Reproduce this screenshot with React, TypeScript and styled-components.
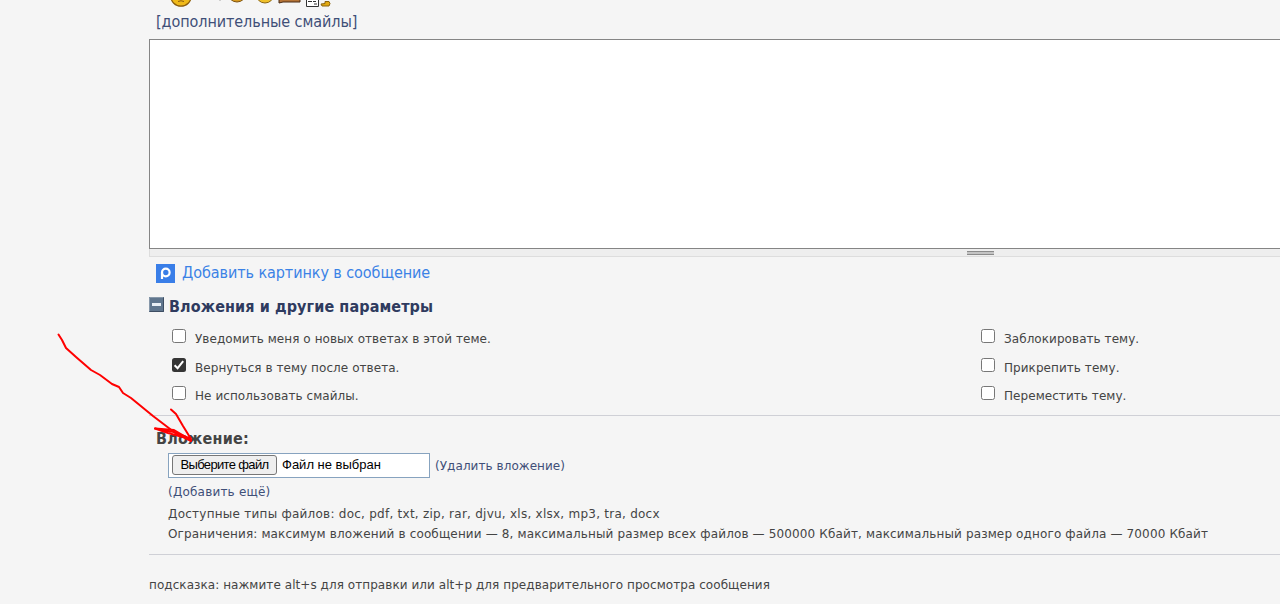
import styled, { createGlobalStyle } from "styled-components";

const Colours = {
  page: "#f5f5f5",
  text: "#444444",
  heading: "#2f3b5f",
  link: "#3f4f78",
  accent: "#3b82e6",
  rule: "#cfd0d6",
  arrow: "#ff0000",
};

const posting = [
  { label: "Уведомить меня о новых ответах в этой теме.", checked: false },
  { label: "Вернуться в тему после ответа.", checked: true },
  { label: "Не использовать смайлы.", checked: false },
];

const moderation = [
  { label: "Заблокировать тему.", checked: false },
  { label: "Прикрепить тему.", checked: false },
  { label: "Переместить тему.", checked: false },
];

const Smilies = () => (
  <SmiliesStrip viewBox="0 0 170 8">
    <circle cx="16" cy="-4" r="10.200" fill="#efb919" stroke="#8b5c08" strokeWidth="1.200" />
    <path d="M13 1.500Q16 0 19 1.500" fill="none" stroke="#8a5a10" />
    <path d="M54 0h2" stroke="#aaa" />
    <circle cx="72" cy="-7" r="9" fill="#d99b20" stroke="#7d5210" />
    <circle cx="100" cy="-6" r="9" fill="#efc02a" stroke="#8b6410" />
    <path d="M114 -1h21v3h-17l-4 1z" fill="#b57437" stroke="#4a2c17" />
    <path d="M141.500 -2h12v8.500h-12z" fill="#fff" stroke="#333" />
    <path d="M143 1.500h4M149 4h3M148 1.500h3" stroke="#333" />
    <path d="M160 1.500h4l1 2-1 2.500h-7l-1-2 4-0.500z" fill="#e2aa13" stroke="#8b6410" />
  </SmiliesStrip>
);

const Option = ({ label, checked }: { label: string; checked: boolean }) => (
  <OptionLabel>
    <Box $checked={checked}>
      {checked && (
        <svg viewBox="0 0 14 14">
          <path d="M2.600 7.200l3 3 5.600-7" fill="none" stroke="#fff" strokeWidth="2" />
        </svg>
      )}
    </Box>
    <span>{label}</span>
  </OptionLabel>
);

const App = () => (
  <>
    <GlobalStyle />
    <Page>
      <Smilies />
      <MoreSmilies>[дополнительные смайлы]</MoreSmilies>
      <Message />
      <Grip>
        <i />
      </Grip>
      <AddPicture>
        <svg width="19" height="19" viewBox="0 0 19 19">
          <path d="M0 0h19v19H0z" fill="#397ee8" />
          <circle cx="9.800" cy="8.500" r="3.800" fill="none" stroke="#fff" strokeWidth="2.200" />
          <path d="M6 8.500V15" stroke="#fff" strokeWidth="2.200" />
        </svg>
        <span>Добавить картинку в сообщение</span>
      </AddPicture>
      <SectionTitle>
        <svg width="15" height="15" viewBox="0 0 15 15">
          <path d="M0 0h15v15H0z" fill="#60768e" />
          <path d="M0.500 14.500V0.500H14.500" fill="none" stroke="#8798aa" />
          <path d="M14.500 0.500V14.500H0.500" fill="none" stroke="#3e4e63" />
          <path d="M3 6h9v3H3z" fill="#e9eff5" />
        </svg>
        <span>Вложения и другие параметры</span>
      </SectionTitle>
      <Options>
        <div>
          {posting.map((item) => (
            <Option key={item.label} {...item} />
          ))}
        </div>
        <div>
          {moderation.map((item) => (
            <Option key={item.label} {...item} />
          ))}
        </div>
      </Options>
      <AttachmentTitle>Вложение:</AttachmentTitle>
      <FileRow>
        <FileInput>
          <FileButton>Выберите файл</FileButton>
          <span>Файл не выбран</span>
        </FileInput>
        <RemoveLink>(Удалить вложение)</RemoveLink>
      </FileRow>
      <AddMore>(Добавить ещё)</AddMore>
      <Info $spacing={0.25}>
        Доступные типы файлов: doc, pdf, txt, zip, rar, djvu, xls, xlsx, mp3, tra, docx
      </Info>
      <Info $spacing={0.14}>
        Ограничения: максимум вложений в сообщении — 8, максимальный размер всех файлов — 500000
        Кбайт, максимальный размер одного файла — 70000 Кбайт
      </Info>
      <Hint>подсказка: нажмите alt+s для отправки или alt+p для предварительного просмотра сообщения</Hint>
    </Page>
    <Arrow viewBox="0 0 160 124">
      <path d="M18.500 14.500L22 20 26 28 36 37 51 50 60 55 72 64 79 67 83 73 91 78 113 96 134 112 151 121" />
      <path d="M131 89.500L136 94 143 106 151 119 134 112 115 108.500 128 113 150 119" />
      <path d="M115 108.500L134 110 151 120" />
    </Arrow>
  </>
);

export default App;

const GlobalStyle = createGlobalStyle`
  body {
    margin: 0;
    background: ${Colours.page};
    color: ${Colours.text};
    font: 12px/20px "DejaVu Sans", sans-serif;
    letter-spacing: 0.06px;
    overflow: hidden;
  }
`;

const Page = styled.main`
  display: flex;
  flex-direction: column;
  height: 604px;
  padding-left: 149px;
  overflow: hidden;
  white-space: nowrap;
`;

const SmiliesStrip = styled.svg`
  flex: none;
  width: 170px;
  height: 8px;
  margin-left: 16px;
`;

const MoreSmilies = styled.a`
  height: 31px;
  padding-left: 7px;
  font-family: "DejaVu Sans Condensed", sans-serif;
  font-size: 16px;
  line-height: 27px;
  letter-spacing: -0.07px;
  color: ${Colours.link};
`;

const Message = styled.div`
  box-sizing: border-box;
  height: 210px;
  border: 1px solid #858585;
  border-right: 0;
  background: #fff;
`;

const Grip = styled.div`
  display: flex;
  justify-content: center;
  box-sizing: border-box;
  height: 8px;
  width: 1663px;
  padding-top: 2px;
  border: 1px solid #dddddd;
  border-top: 0;
  background: #eeeeee;
  i {
    box-sizing: border-box;
    width: 27px;
    height: 4px;
    border: solid #8b8b8b;
    border-width: 1px 0;
    background: #c4c4c4;
  }
`;

const AddPicture = styled.a`
  display: flex;
  align-items: center;
  gap: 7px;
  height: 33px;
  padding-left: 7px;
  font-family: "DejaVu Sans Condensed", sans-serif;
  font-size: 16px;
  letter-spacing: -0.07px;
  color: ${Colours.accent};
  span {
    padding-bottom: 2px;
  }
`;

const SectionTitle = styled.h3`
  display: flex;
  gap: 5px;
  height: 38px;
  margin: 0;
  padding-top: 7px;
  box-sizing: border-box;
  font-family: "DejaVu Sans Condensed", sans-serif;
  font-size: 16px;
  line-height: 20px;
  letter-spacing: 0.1px;
  color: ${Colours.heading};
`;

const Options = styled.div`
  display: grid;
  grid-template-columns: 809px 1fr;
  box-sizing: border-box;
  height: 88px;
  padding-left: 23px;
  border-bottom: 1px solid ${Colours.rule};
`;

const OptionLabel = styled.label`
  display: flex;
  gap: 9px;
  height: 28.500px;
  span {
    line-height: 23px;
  }
`;

const Box = styled.i<{ $checked: boolean }>`
  box-sizing: border-box;
  width: 14px;
  height: 14px;
  margin-top: 1px;
  border: ${(p) => (p.$checked ? "0" : "1px solid #777")};
  border-radius: 2.500px;
  background: ${(p) => (p.$checked ? "#353535" : "#fff")};
  svg {
    display: block;
  }
`;

const AttachmentTitle = styled.h4`
  height: 37px;
  margin: 0;
  padding-left: 7px;
  box-sizing: border-box;
  padding-top: 13px;
  font-family: "DejaVu Sans Condensed", sans-serif;
  font-size: 16px;
  letter-spacing: 0.2px;
`;

const FileRow = styled.div`
  display: flex;
  align-items: center;
  gap: 5px;
  padding-left: 19px;
`;

const FileInput = styled.div`
  display: flex;
  align-items: center;
  gap: 5px;
  box-sizing: border-box;
  width: 262px;
  height: 25px;
  padding-left: 3px;
  border: 1px solid #87a3bf;
  background: #fff;
  color: #000;
  font-family: "Liberation Sans", sans-serif;
  font-size: 13px;
  letter-spacing: 0;
  > span {
    padding-bottom: 2px;
  }
`;

const FileButton = styled.div`
  box-sizing: border-box;
  width: 105px;
  height: 20px;
  margin-bottom: 1px;
  border: 1px solid #777;
  border-radius: 3px;
  background: #efefef;
  line-height: 17px;
  letter-spacing: -0.65px;
  text-align: center;
`;

const RemoveLink = styled.a`
  color: ${Colours.link};
`;

const AddMore = styled.a`
  padding: 4px 0 2px 19px;
  letter-spacing: 0.2px;
  color: ${Colours.link};
`;

const Info = styled.div<{ $spacing: number }>`
  padding-left: 19px;
  letter-spacing: ${(p) => p.$spacing}px;
`;

const Hint = styled.div`
  margin-top: 10px;
  padding-top: 20px;
  border-top: 1px solid ${Colours.rule};
`;

/* hand-drawn pointer over the attachment field */
const Arrow = styled.svg`
  position: absolute;
  left: 40px;
  top: 320px;
  width: 160px;
  height: 124px;
  overflow: visible;
  path {
    fill: none;
    stroke: ${Colours.arrow};
    stroke-width: 2;
    stroke-linejoin: round;
    stroke-linecap: round;
  }
`;
